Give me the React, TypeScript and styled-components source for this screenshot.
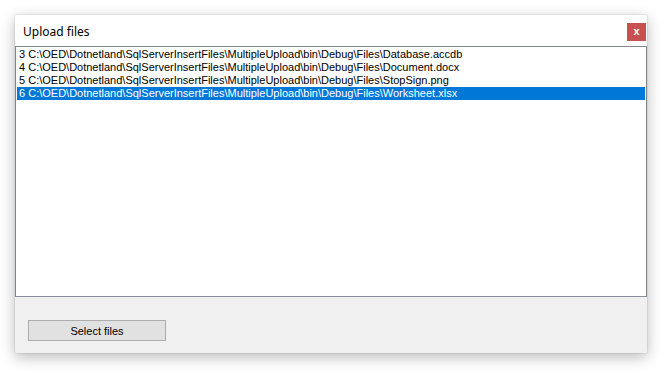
import React from 'react'
import styled, { createGlobalStyle } from 'styled-components'

const files = [
    { id: 3, path: 'C:\\OED\\Dotnetland\\SqlServerInsertFiles\\MultipleUpload\\bin\\Debug\\Files\\Database.accdb' },
    { id: 4, path: 'C:\\OED\\Dotnetland\\SqlServerInsertFiles\\MultipleUpload\\bin\\Debug\\Files\\Document.docx' },
    { id: 5, path: 'C:\\OED\\Dotnetland\\SqlServerInsertFiles\\MultipleUpload\\bin\\Debug\\Files\\StopSign.png' },
    { id: 6, path: 'C:\\OED\\Dotnetland\\SqlServerInsertFiles\\MultipleUpload\\bin\\Debug\\Files\\Worksheet.xlsx' },
]

const App: React.FC = () => {
    const selected = 6

    return (
        <>
            <GlobalStyle />
            <Page>
                <Window>
                    <TitleBar>
                        <Title>Upload files</Title>
                        <CloseButton>x</CloseButton>
                    </TitleBar>
                    <ListBox>
                        {files.map(f => (
                            <ListItem key={f.id} selected={f.id === selected}>
                                {f.id} {f.path}
                            </ListItem>
                        ))}
                    </ListBox>
                    <Footer>
                        <Button>Select files</Button>
                    </Footer>
                </Window>
            </Page>
        </>
    )
}

export default App

const GlobalStyle = createGlobalStyle`
    html, body {
        margin: 0;
        padding: 0;
        background: #fff;
    }
`

const Page = styled.div`
    width: 664px;
    height: 373px;
    padding: 15px 0 0 15px;
    box-sizing: border-box;
`

const Window = styled.div`
    width: 632px;
    height: 338px;
    display: flex;
    flex-direction: column;
    background: #f0f0f0;
    box-shadow: 0 4px 14px rgba(0, 0, 0, 0.28), 0 0 1px rgba(0, 0, 0, 0.35);
    font-family: "Liberation Sans", Arial, sans-serif;
`

const TitleBar = styled.div`
    height: 31px;
    background: #fff;
    display: flex;
    align-items: center;
    justify-content: space-between;
    padding: 0 1px 0 8px;
`

const Title = styled.span`
    font-family: "Noto Sans", "Open Sans", sans-serif;
    font-size: 12px;
    color: #000;
    margin-top: 2px;
`

const CloseButton = styled.div`
    width: 19px;
    height: 18px;
    margin-top: 3px;
    background: #c75050;
    color: #fff;
    font-size: 11px;
    font-weight: bold;
    display: flex;
    align-items: center;
    justify-content: center;
    line-height: 1;
    padding-bottom: 2px;
    box-sizing: border-box;
`

const ListBox = styled.div`
    height: 251px;
    background: #fff;
    border: 1px solid #828790;
    border-bottom-color: #8a8c98;
    box-sizing: border-box;
    padding: 1px 1px 0 1px;
    display: flex;
    flex-direction: column;
`

const ListItem = styled.div<{ selected?: boolean }>`
    height: 13px;
    line-height: 13px;
    font-size: 11px;
    padding-left: 2px;
    white-space: nowrap;
    color: ${props => props.selected ? '#fff' : '#000'};
    background: ${props => props.selected ? '#0078d7' : 'transparent'};
`

const Footer = styled.div`
    flex: 1;
    padding: 23px 0 0 13px;
`

const Button = styled.div`
    width: 138px;
    height: 21px;
    box-sizing: border-box;
    border: 1px solid #adadad;
    background: #e1e1e1;
    font-size: 11px;
    color: #000;
    display: flex;
    align-items: center;
    justify-content: center;
`
